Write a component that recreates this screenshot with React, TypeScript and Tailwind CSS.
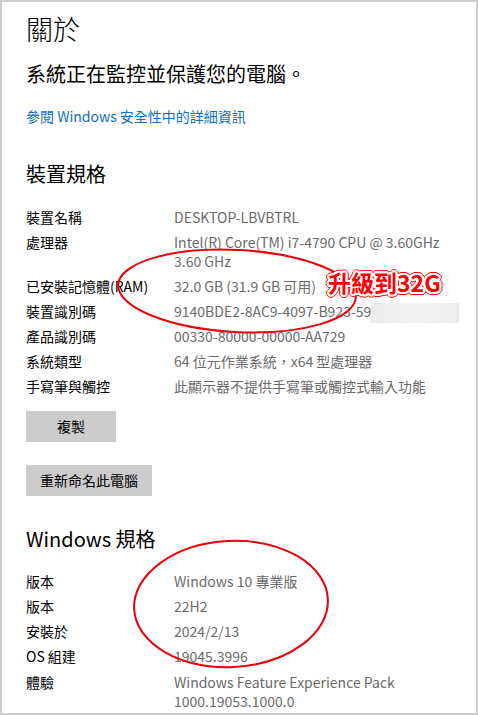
const deviceSpecs: [string, string, string?][] = [
  ['裝置名稱', 'DESKTOP-LBVBTRL'],
  ['處理器', 'Intel(R) Core(TM) i7-4790 CPU @ 3.60GHz', '3.60 GHz'],
  ['已安裝記憶體(RAM)', '32.0 GB (31.9 GB 可用)'],
  ['裝置識別碼', 'MASKED'],
  ['產品識別碼', '00330-80000-00000-AA729'],
  ['系統類型', '64 位元作業系統，x64 型處理器'],
  ['手寫筆與觸控', '此顯示器不提供手寫筆或觸控式輸入功能'],
];

const winSpecs: [string, string, string?][] = [
  ['版本', 'Windows 10 專業版'],
  ['版本', '22H2'],
  ['安裝於', '2024/2/13'],
  ['OS 組建', '19045.3996'],
  ['體驗', 'Windows Feature Experience Pack', '1000.19053.1000.0'],
];

const SpecRow = ({ label, value, second }: { label: string; value: string; second?: string }) => (
  <div className="grid grid-cols-[148px_1fr] text-[14px] leading-[19px]">
    <span className="text-black">{label}</span>
    {value == 'MASKED' ? (
      <div className="flex items-start h-[19px] text-[#6b6b6b]">
        <span className="whitespace-nowrap">9140BDE2-8AC9-4097-B923-59</span>
        <div className="w-[88px] h-[20px] mt-[1px] bg-gradient-to-r from-[#ebebeb] via-[#f3f3f3] to-[#ededed]"></div>
      </div>
    ) : (
      <span className="text-[#6b6b6b] whitespace-nowrap">
        {value}
        {second && (
          <>
            <br />
            {second}
          </>
        )}
      </span>
    )}
  </div>
);

const App = () => {
  return (
    <div className="relative w-[478px] h-[715px] overflow-hidden bg-white border-2 border-[#cdcdcd] font-['Noto_Sans_CJK_TC','Noto_Sans_CJK_SC',sans-serif]">
      <div className="flex flex-col items-start pl-6 pt-[11px]">
        <h1 className="text-[27px] leading-[32px] font-light text-black">關於</h1>
        <p className="mt-4 text-[20px] leading-[26px] text-black">系統正在監控並保護您的電腦。</p>
        <a className="mt-5 text-[14px] leading-[18px] text-[#0b6fc7]">參閱 Windows 安全性中的詳細資訊</a>

        <h2 className="mt-9 text-[20px] leading-[26px] text-black">裝置規格</h2>
        <div className="mt-[20.5px] flex flex-col gap-[6px] w-full">
          {deviceSpecs.map(([l, v, s], i) => (
            <SpecRow key={i} label={l} value={v} second={s} />
          ))}
        </div>

        <button className="mt-[15.5px] w-[90px] h-[31px] bg-[#cccccc] text-[14px] text-black">複製</button>
        <button className="mt-[23px] w-[126px] h-[31px] bg-[#cccccc] text-[14px] text-black">重新命名此電腦</button>

        <h2 className="mt-[30px] text-[20px] leading-[26px] text-black">Windows 規格</h2>
        <div className="mt-[19.5px] flex flex-col gap-[6.25px] w-full">
          {winSpecs.map(([l, v, s], i) => (
            <SpecRow key={i} label={l} value={v} second={s} />
          ))}
        </div>
      </div>

      {/* hand drawn annotation marks */}
      <svg className="absolute -left-[2px] -top-[2px] pointer-events-none" width="478" height="715">
        <ellipse cx="237" cy="291" rx="119" ry="41" transform="rotate(3 237 291)" fill="none" stroke="#e8000b" strokeWidth="2" />
        <ellipse cx="231" cy="604" rx="97" ry="63" transform="rotate(-3 231 604)" fill="none" stroke="#e8000b" strokeWidth="2" />
      </svg>
      <span className="absolute left-[326px] top-[266px] text-[23px] leading-[28px] font-bold text-[#ff0000] whitespace-nowrap [text-shadow:1px_0_0_#fff,-1px_0_0_#fff,0_1px_0_#fff,0_-1px_0_#fff,2px_0_0_#fff,-2px_0_0_#fff,0_2px_0_#fff,0_-2px_0_#fff,1px_1px_0_#fff,-1px_1px_0_#fff,1px_-1px_0_#fff,-1px_-1px_0_#fff,2px_1px_0_#fff,-2px_1px_0_#fff,2px_-1px_0_#fff,-2px_-1px_0_#fff,1px_2px_0_#fff,-1px_2px_0_#fff,1px_-2px_0_#fff,-1px_-2px_0_#fff,3px_0_0_#f00,-3px_0_0_#f00,0_3px_0_#f00,0_-3px_0_#f00,2px_2px_0_#f00,-2px_2px_0_#f00,2px_-2px_0_#f00,-2px_-2px_0_#f00,3px_1px_0_#f00,-3px_1px_0_#f00,3px_-1px_0_#f00,-3px_-1px_0_#f00,1px_3px_0_#f00,-1px_3px_0_#f00,1px_-3px_0_#f00,-1px_-3px_0_#f00]">
        升級到32G
      </span>
    </div>
  );
};

export default App;
